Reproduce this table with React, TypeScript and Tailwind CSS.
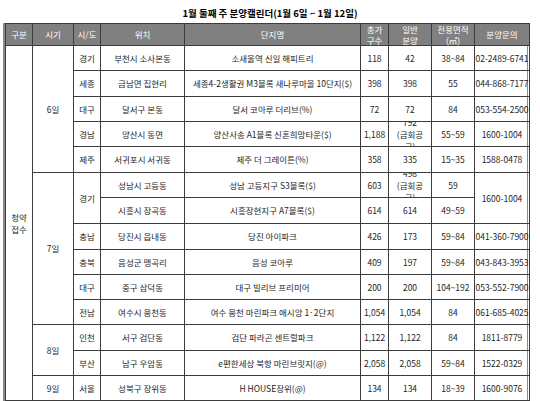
import React from "react";
import clsx from "clsx";

function Td({
    children,
    className,
    rowSpan,
}: {
    children?: React.ReactNode;
    className?: string;
    rowSpan?: number;
}) {
    return (
        <td rowSpan={rowSpan} className={clsx("border border-[#3c3c3c] p-0 text-center align-middle whitespace-nowrap", className)}>
            {children}
        </td>
    );
}

function Th({ children }: { children: React.ReactNode }) {
    return (
        <th className="border border-[#3c3c3c] bg-[#808080] p-0 text-center align-middle font-normal leading-[10.5px] text-white">
            {children}
        </th>
    );
}

// 금회공급 칸: 원본처럼 줄이 넘쳐서 잘림
function Clipped({ n }: { n: string }) {
    return (
        <div className="flex h-[24px] flex-col items-center justify-center overflow-hidden leading-[12px]">
            <span>{n}</span>
            <span>(금회공</span>
            <span>급)</span>
        </div>
    );
}

export default function App() {
    return (
        <div className="h-[401px] w-[540px] bg-white font-['Noto_Sans_CJK_KR','Noto_Sans',sans-serif] text-[8.5px] text-[#1e1e1e]">
            <div className="h-[23px] pt-[6px] text-center text-[9.5px] leading-[14px] font-bold text-black">
                1월 둘째 주 분양캘린더(1월 6일 ~ 1월 12일)
            </div>
            <div className="ml-[3px] w-[525px] border-b-2 border-l-2 border-r border-[#8a8a8a]">
                <table className="w-[524px] table-fixed border-collapse">
                    <colgroup>
                        <col className="w-[27px]" />
                        <col className="w-[41px]" />
                        <col className="w-[27px]" />
                        <col className="w-[84px]" />
                        <col className="w-[176px]" />
                        <col className="w-[28px]" />
                        <col className="w-[43px]" />
                        <col className="w-[43px]" />
                        <col className="w-[55px]" />
                    </colgroup>
                    <thead>
                        <tr className="h-[20px]">
                            <Th>구분</Th>
                            <Th>시기</Th>
                            <Th>시/도</Th>
                            <Th>위치</Th>
                            <Th>단지명</Th>
                            <Th>
                                총가
                                <br />
                                구수
                            </Th>
                            <Th>
                                일반
                                <br />
                                분양
                            </Th>
                            <Th>
                                전용면적
                                <br />
                                (㎡)
                            </Th>
                            <Th>분양문의</Th>
                        </tr>
                    </thead>
                    <tbody>
                        <tr className="h-[25px]">
                            <Td rowSpan={14} className="leading-[12px]">
                                청약
                                <br />
                                접수
                            </Td>
                            <Td rowSpan={5}>6일</Td>
                            <Td>경기</Td>
                            <Td>부천시 소사본동</Td>
                            <Td>소새울역 신일 해피트리</Td>
                            <Td>118</Td>
                            <Td>42</Td>
                            <Td>38~84</Td>
                            <Td>02-2489-6741</Td>
                        </tr>
                        <tr className="h-[26px]">
                            <Td>세종</Td>
                            <Td>금남면 집현리</Td>
                            <Td>세종4-2생활권 M3블록 새나루마을 10단지($)</Td>
                            <Td>398</Td>
                            <Td>398</Td>
                            <Td>55</Td>
                            <Td>044-868-7177</Td>
                        </tr>
                        <tr className="h-[25px]">
                            <Td>대구</Td>
                            <Td>달서구 본동</Td>
                            <Td>달서 코아루 더리브(%)</Td>
                            <Td>72</Td>
                            <Td>72</Td>
                            <Td>84</Td>
                            <Td>053-554-2500</Td>
                        </tr>
                        <tr className="h-[25px]">
                            <Td>경남</Td>
                            <Td>양산시 동면</Td>
                            <Td>양산사송 A1블록 신혼희망타운($)</Td>
                            <Td>1,188</Td>
                            <Td>
                                <Clipped n="792" />
                            </Td>
                            <Td>55~59</Td>
                            <Td>1600-1004</Td>
                        </tr>
                        <tr className="h-[26px]">
                            <Td>제주</Td>
                            <Td>서귀포시 서귀동</Td>
                            <Td>제주 더 그레이튼(%)</Td>
                            <Td>358</Td>
                            <Td>335</Td>
                            <Td>15~35</Td>
                            <Td>1588-0478</Td>
                        </tr>
                        <tr className="h-[25px]">
                            <Td rowSpan={6}>7일</Td>
                            <Td rowSpan={2}>경기</Td>
                            <Td>성남시 고등동</Td>
                            <Td>성남 고등지구 S3블록($)</Td>
                            <Td>603</Td>
                            <Td>
                                <Clipped n="498" />
                            </Td>
                            <Td>59</Td>
                            <Td rowSpan={2}>1600-1004</Td>
                        </tr>
                        <tr className="h-[26px]">
                            <Td>시흥시 장곡동</Td>
                            <Td>시흥장현지구 A7블록($)</Td>
                            <Td>614</Td>
                            <Td>614</Td>
                            <Td>49~59</Td>
                        </tr>
                        <tr className="h-[26px]">
                            <Td>충남</Td>
                            <Td>당진시 읍내동</Td>
                            <Td>당진 아이파크</Td>
                            <Td>426</Td>
                            <Td>173</Td>
                            <Td>59~84</Td>
                            <Td>041-360-7900</Td>
                        </tr>
                        <tr className="h-[25px]">
                            <Td>충북</Td>
                            <Td>음성군 맹곡리</Td>
                            <Td>음성 코아루</Td>
                            <Td>409</Td>
                            <Td>197</Td>
                            <Td>59~84</Td>
                            <Td>043-843-3953</Td>
                        </tr>
                        <tr className="h-[25px]">
                            <Td>대구</Td>
                            <Td>중구 삼덕동</Td>
                            <Td>대구 빌리브 프리미어</Td>
                            <Td>200</Td>
                            <Td>200</Td>
                            <Td>104~192</Td>
                            <Td>053-552-7900</Td>
                        </tr>
                        <tr className="h-[25px]">
                            <Td>전남</Td>
                            <Td>여수시 웅천동</Td>
                            <Td>여수 웅천 마린파크 애시앙 1·2단지</Td>
                            <Td>1,054</Td>
                            <Td>1,054</Td>
                            <Td>84</Td>
                            <Td>061-685-4025</Td>
                        </tr>
                        <tr className="h-[26px]">
                            <Td rowSpan={2}>8일</Td>
                            <Td>인천</Td>
                            <Td>서구 검단동</Td>
                            <Td>검단 파라곤 센트럴파크</Td>
                            <Td>1,122</Td>
                            <Td>1,122</Td>
                            <Td>84</Td>
                            <Td>1811-8779</Td>
                        </tr>
                        <tr className="h-[25px]">
                            <Td>부산</Td>
                            <Td>남구 우암동</Td>
                            <Td>e편한세상 북항 마린브릿지(@)</Td>
                            <Td>2,058</Td>
                            <Td>2,058</Td>
                            <Td>59~84</Td>
                            <Td>1522-0329</Td>
                        </tr>
                        <tr className="h-[25px]">
                            <Td>9일</Td>
                            <Td>서울</Td>
                            <Td>성북구 장위동</Td>
                            <Td>H HOUSE장위(@)</Td>
                            <Td>134</Td>
                            <Td>134</Td>
                            <Td>18~39</Td>
                            <Td>1600-9076</Td>
                        </tr>
                    </tbody>
                </table>
            </div>
        </div>
    );
}
